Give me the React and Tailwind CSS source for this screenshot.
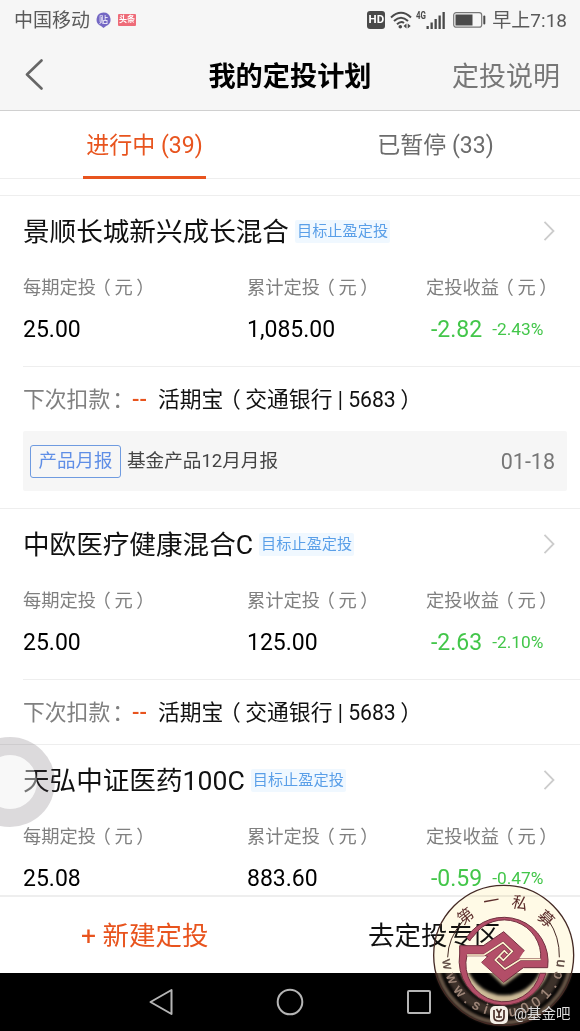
import React from "react";

const plans = [
	{
		name: "景顺长城新兴成长混合",
		amount: "25.00",
		total: "1,085.00",
		profit: "-2.82",
		rate: "-2.43%",
		account: { bank: "交通银行", tail: "5683" },
		report: { title: "基金产品12月月报", date: "01-18" },
	},
	{
		name: "中欧医疗健康混合C",
		amount: "25.00",
		total: "125.00",
		profit: "-2.63",
		rate: "-2.10%",
		account: { bank: "交通银行", tail: "5683" },
	},
	{
		name: "天弘中证医药100C",
		amount: "25.08",
		total: "883.60",
		profit: "-0.59",
		rate: "-0.47%",
	},
];

function StatusBar() {
	return (
		<div className="flex h-10 items-center justify-between pl-[14px] pr-[13px] text-[19px] text-[#5a5a5a]">
			<div className="flex items-center">
				<span className="pt-[2px]">中国移动</span>
				<svg className="ml-[6px] h-4 w-[15px]" viewBox="0 0 15 16">
					<path d="M7.5 .5a7 7 0 0 1 2.6 13.5L7.5 16 5 14A7 7 0 0 1 7.5 .5Z" fill="#7468c4" />
					<text x="7.5" y="10.8" fontSize="9" fill="#fff" textAnchor="middle">
						贴
					</text>
				</svg>
				<span className="ml-[7px] flex h-[12px] w-[18px] items-center justify-center rounded-[1px] bg-[#ee6b78] text-[8px] font-bold leading-none text-white">
					头条
				</span>
			</div>
			<div className="flex items-center">
				<span className="flex h-[18px] w-[18px] items-center justify-center rounded-[3px] bg-[#4a4a4a] text-[11.500px] font-bold leading-none text-white">
					HD
				</span>
				<svg
					className="ml-[5px] h-5 w-[22px]"
					viewBox="0 0 22 20"
					fill="none"
					stroke="#4a4a4a"
					strokeWidth="2">
					<path d="M1 7.5Q11 -2 21 7.5" />
					<path d="M4 11Q11 4.500 18 11" />
					<path d="M7 14.300Q11 10.500 14 13" />
					<circle cx="10.300" cy="16.800" r="1.800" fill="#4a4a4a" stroke="none" />
					<path d="M16.500 13.500v5l-3-2.500ZM17.700 13.500v5l3-2.500Z" fill="#4a4a4a" stroke="none" />
				</svg>
				<svg className="ml-[4px] h-5 w-[30px]" viewBox="0 0 30 20" fill="#4a4a4a">
					<text
						x="0"
						y="8.500"
						fontSize="10"
						fontWeight="700"
						textLength="10"
						lengthAdjust="spacingAndGlyphs">
						4G
					</text>
					<rect x="10.500" y="16" width="2.300" height="3" />
					<rect x="14.500" y="12.500" width="2.300" height="6.500" />
					<rect x="18.500" y="9" width="2.300" height="10" />
					<rect x="22.500" y="5.500" width="2.300" height="13.500" />
					<rect x="26.500" y="2" width="2.300" height="17" />
				</svg>
				<svg className="ml-[7px] h-4 w-[33px]" viewBox="0 0 33 16">
					<rect x=".7" y=".7" width="28" height="14.500" rx="2.500" fill="none" stroke="#777" strokeWidth="1.200" />
					<rect x="2.500" y="2.500" width="17" height="11" fill="#4a4a4a" />
					<rect x="30.300" y="3.500" width="2" height="9" rx="1" fill="#4a4a4a" />
				</svg>
				<span className="ml-[6px] pt-[2px]">早上7:18</span>
			</div>
		</div>
	);
}

function Header() {
	return (
		<div className="flex h-[70px] items-center pl-[23px] pr-[20px]">
			<div className="w-[105px]">
				<svg
					className="h-8 w-5"
					viewBox="0 0 20 32"
					fill="none"
					stroke="#666"
					strokeWidth="2.600"
					strokeLinecap="round"
					strokeLinejoin="round">
					<path d="M18.500 1.500 4 15.500 18.500 29.500" />
				</svg>
			</div>
			<h1 className="flex-1 pt-[4px] text-center text-[27.200px] font-bold text-black">我的定投计划</h1>
			<span className="w-[108px] whitespace-nowrap pt-[4px] text-[27px] text-[#777]">定投说明</span>
		</div>
	);
}

function Tabs() {
	return (
		<div className="flex h-[68px] shrink-0 border-b border-[#eee] text-[23px]">
			<div className="flex flex-1 justify-center pr-[2px]">
				<div className="flex h-[68px] w-[123px] items-center justify-center whitespace-nowrap border-b-[3px] border-[#e8541e] pt-[5px] text-[#e8541e]">
					进行中 (39)
				</div>
			</div>
			<div className="flex flex-1 items-center justify-center pt-[3px] text-[#6c6c6c]">已暂停 (33)</div>
		</div>
	);
}

// Full-width brackets sit in the middle of their cell
function Bracketed({ children }) {
	return (
		<>
			<span className="-ml-[0.200em] mr-[0.200em]">（</span>
			{children}
			<span className="-mr-[0.200em] ml-[0.200em]">）</span>
		</>
	);
}

function Label({ children }) {
	return (
		<span className="whitespace-nowrap pt-px text-[18.300px] text-[#808080]">
			{children}
			<Bracketed>元</Bracketed>
		</span>
	);
}

function PlanCard({ plan }) {
	return (
		<div className="border-t border-[#eee] pl-[23px]">
			<div className="flex h-[73px] items-center pb-[3px] pr-[25px]">
				<span className="pt-[2px] text-[26.600px] text-[#111]">{plan.name}</span>
				<span className="ml-[6px] flex h-[23px] items-center rounded-[2px] bg-[#f0f8ff] px-[2px] text-[15.200px] text-[#5a9fe8]">
					目标止盈定投
				</span>
				<svg
					className="ml-auto h-5 w-3"
					viewBox="0 0 12 20"
					fill="none"
					stroke="#ccc"
					strokeWidth="1.800">
					<path d="M1.500 .8 10.500 10 1.500 19.200" />
				</svg>
			</div>
			<div className="grid h-[97px] grid-cols-[224px_179px_1fr] grid-rows-[36px_48px] items-center">
				<Label>每期定投</Label>
				<Label>累计定投</Label>
				<Label>定投收益</Label>
				<span className="pt-[2px] text-[23px] text-black">{plan.amount}</span>
				<span className="pt-[2px] text-[23px] text-black">{plan.total}</span>
				<span className="flex items-center pl-[5px] pt-[2px] text-[#43c64a]">
					<span className="text-[23px]">{plan.profit}</span>
					<span className="ml-[10px] text-[17.300px]">{plan.rate}</span>
				</span>
			</div>
			{plan.account && (
				<div className="flex h-[65px] items-center whitespace-nowrap border-t border-[#eee] pt-[2px] text-[21.800px]">
					<span className="text-[#808080]">
						下次扣款<span className="-mr-[2px] ml-[2px]">：</span>
					</span>
					<span className="w-[26px] font-medium text-[#e8541e]">--</span>
					<span className="text-[#111]">
						活期宝
						<Bracketed>
							{plan.account.bank}
							<span className="text-[21.200px]"> | {plan.account.tail}</span>
						</Bracketed>
					</span>
				</div>
			)}
			{plan.report && (
				<div className="mb-[17px] mr-[13px] flex h-[60px] items-center rounded-[2px] bg-[#f6f6f6] pl-[7px] pr-[12px]">
					<span className="flex h-[33px] w-[91px] items-center justify-center rounded-[3px] border border-[#6f9be0] pt-px text-[18.500px] text-[#5f8ee6]">
						产品月报
					</span>
					<span className="ml-[6px] pt-[2px] text-[18.600px] text-[#444]">{plan.report.title}</span>
					<span className="ml-auto pt-[2px] text-[21.500px] text-[#777]">{plan.report.date}</span>
				</div>
			)}
		</div>
	);
}

function NavBar() {
	return (
		<div className="flex h-[58px] shrink-0 items-center justify-center bg-black">
			<svg className="h-[30px] w-[290px]" viewBox="0 0 290 30" fill="none" stroke="#b5b5b5" strokeWidth="2">
				<path d="M26.500 3v24L5.500 15Z" strokeLinejoin="round" />
				<circle cx="145" cy="15" r="12.300" />
				<rect x="263" y="4" width="22" height="22" rx="1" />
			</svg>
		</div>
	);
}

function Seal() {
	return (
		<>
			{/* Cream disc, tints the page without hiding its text */}
			<svg
				className="absolute left-[420px] top-[870px] h-[161px] w-[160px] mix-blend-multiply"
				viewBox="0 0 480 483">
				<circle cx="251" cy="256" r="209" fill="#fffae6" />
			</svg>
			<svg className="absolute left-[420px] top-[870px] h-[161px] w-[160px]" viewBox="0 0 480 483">
				<defs>
					<clipPath id="onBlack">
						<rect x="0" y="309" width="480" height="174" />
					</clipPath>
					<filter id="glow" x="-20%" y="-20%" width="140%" height="140%">
						<feGaussianBlur stdDeviation="5" />
					</filter>
					<linearGradient id="ink" gradientUnits="userSpaceOnUse" x1="0" y1="300" x2="0" y2="318">
						<stop offset="0" stopColor="#5a453e" />
						<stop offset="1" stopColor="#a38a7c" />
					</linearGradient>
					<path id="rim" d="M67 256A184 184 0 0 0 435 256" />
				</defs>
				<g clipPath="url(#onBlack)">
					<g fill="none" filter="url(#glow)">
						<circle cx="251" cy="256" r="202" stroke="#74604f" strokeWidth="12" />
						<circle cx="251" cy="256" r="168" stroke="#3e3029" strokeWidth="30" />
						<circle cx="253" cy="260" r="128" stroke="#cdbb98" strokeWidth="24" />
						<path d="M185 277 251 340 310 297H400" stroke="#cdbb98" strokeWidth="10" />
					</g>
				</g>
				<circle cx="251" cy="256" r="210" fill="none" stroke="#452a24" strokeWidth="4" />
				<path d="M83 262Q84 205 127 155M418 262Q419 200 386 152" fill="none" stroke="#452a24" strokeWidth="3" />
				<g fill="#5b2c2a" fontSize="48" textAnchor="middle">
					<text transform="translate(137 138) rotate(-38)" y="17">
						第
					</text>
					<text transform="translate(214 93) rotate(-10)" y="17">
						一
					</text>
					<text transform="translate(300 99) rotate(14)" y="17">
						私
					</text>
					<text transform="translate(378 146) rotate(43)" y="17">
						募
					</text>
				</g>
				<text
					fontSize="42"
					fill="url(#ink)"
					stroke="url(#ink)"
					strokeWidth="1"
					fontFamily="Liberation Sans">
					<textPath href="#rim" startOffset="14" textLength="550">
						www.simu001.cn
					</textPath>
				</text>
				<g transform="translate(105 105)">
					<g fill="#b34e68" stroke="#70303f" strokeWidth="3" strokeLinejoin="round">
						<path d="M35 97A133 133 0 0 1 278 188H205L146 232 80 172 125 130 150 152 122 168 150 193 192 163H257A110 110 0 0 0 57 92Q49 99 44 108Z" />
						<path d="M14 122H85L146 80 208 137 150 190 120 165 87 150H36A112 112 0 0 0 255 205H273A133 133 0 0 1 14 147Z" />
					</g>
					<path d="M80 172 146 110 208 137 146 232Z" fill="#b34e68" />
					<path
						d="M36 150H87L144 113 172 139 145 166 134 155M257 163H197L150 192 121 165 148 137 158 147"
						fill="none"
						stroke="#70303f"
						strokeWidth="8"
					/>
					<path
						d="M36 150H87L144 113 172 139 145 166 134 155M257 163H197L150 192 121 165 148 137 158 147"
						fill="none"
						stroke="#fff3d0"
						strokeWidth="5"
					/>
				</g>
			</svg>
			<div className="absolute left-[490px] top-[1005px] flex items-center text-[14.500px] text-[#ddd]">
				<svg className="h-[18px] w-[18px]" viewBox="0 0 18 18">
					<rect width="18" height="18" rx="5" fill="#f5f0e8" />
					<path
						d="M4 4v7q0 4 5 4t5-4V4M6.500 3 9 7l2.500-4M9 7v5M6 11h6"
						fill="none"
						stroke="#4a302a"
						strokeWidth="1.700"
					/>
				</svg>
				<span className="ml-[6px] pt-px leading-[18px]">@基金吧</span>
			</div>
		</>
	);
}

export default function App() {
	return (
		<div
			lang="zh-CN"
			className="relative isolate flex h-[1031px] w-[580px] flex-col overflow-hidden bg-white font-['Roboto','Noto_Sans_CJK_SC',sans-serif]">
			<div className="h-[111px] shrink-0 border-b border-[#d0d0d0] bg-[#f6f6f6]">
				<StatusBar />
				<Header />
			</div>
			<Tabs />
			<div className="mt-[16px] min-h-0 flex-1 overflow-hidden">
				{plans.map((plan) => (
					<PlanCard key={plan.name} plan={plan} />
				))}
			</div>
			<div className="flex h-[78px] shrink-0 border-t-2 border-[#eee] text-[26.500px]">
				<div className="flex flex-1 items-center justify-center pt-px text-[#e8541e]">+ 新建定投</div>
				<div className="flex flex-1 items-center justify-center pr-px pt-px text-[#111]">去定投专区</div>
			</div>
			<NavBar />

			{/* Floating assistive button */}
			<div className="absolute left-[-35px] top-[737px] h-[90px] w-[90px] rounded-full border-[18px] border-[#504552]/20 bg-[#f0f0f0]/45 bg-clip-padding" />
			<Seal />
		</div>
	);
}
